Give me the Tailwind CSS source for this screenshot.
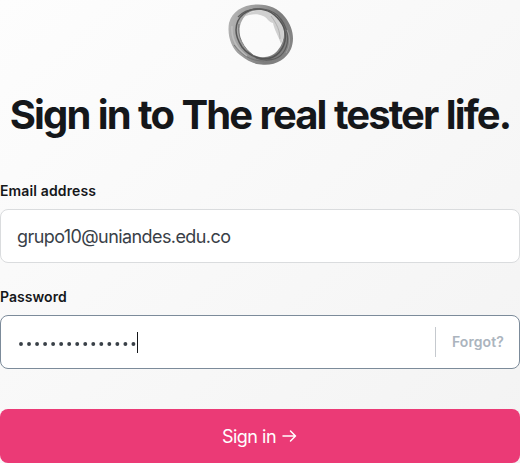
<!DOCTYPE html>
<html lang="en">
<head>
<meta charset="utf-8">
<title>Sign in</title>
<script src="https://cdn.jsdelivr.net/npm/@tailwindcss/browser@4"></script>
</head>
<body class="h-[463px] w-[520px] overflow-hidden bg-linear-to-br from-[#fdfdfd] to-[#f3f3f3] font-['Inter',sans-serif] text-[#15171a]">
<main class="flex h-[463px] flex-col">
  <header class="flex flex-col items-center">
    <svg class="h-[72px] w-20" viewBox="0 0 80 72" fill="none">
      <defs>
        <linearGradient id="ring" x1="8" y1="24" x2="73" y2="44" gradientUnits="userSpaceOnUse"><stop stop-color="#b4b4b4"/><stop offset=".35" stop-color="#999"/><stop offset=".7" stop-color="#7c7c7c"/><stop offset="1" stop-color="#858585"/></linearGradient>
        <filter id="soft"><feGaussianBlur stdDeviation=".45"/></filter>
      </defs>
      <g filter="url(#soft)">
      <path fill="url(#ring)" fill-rule="evenodd" d="M9 23C12 12 22 5 36 4.500C48 4 58 8 65 17C73 27 75 39 71 49C66 60 55 66 41 64.500C33 64 26 60 20 55C11 48 7 35 9 23ZM20 26C18 36 22 47 31 53C38 59 51 59 58 50C64 43 66 32 61 22C56 13 46 8 34 11C27 12 22 18 20 26Z"/>
      <path fill="#d0d0d0" d="M23 17C34 7 52 9 59 18C65 27 65 36 61 44C58 35 54 29 53 23C48 22 48 18 43 16C37 13 30 14 23 17Z"/>
      <path stroke="#555" stroke-width="1.500" d="M16 30C16 17 27 8 40 9C51 10 60 18 64 28C68 40 63 52 53 57C43 62 29 56 22 47C18 41 16 35 16 30Z"/>
      <path stroke="#5c5c5c" stroke-width="1.200" d="M18 17C26 8 45 5 57 15C68 25 71 42 63 53C58 60 46 62 36 58"/>
      <path stroke="#707070" stroke-width=".9" d="M19 24C17 36 23 48 34 56M14 45C22 55 30 61 44 61"/>
      <path stroke="#c8c8c8" stroke-width="1.500" stroke-opacity=".7" d="M12 26C11 37 16 48 27 56"/>
      <path stroke="#a8a8a8" stroke-width=".8" d="M51 16C57 24 60 31 60 39M67 30C71 38 70 46 66 53"/>
      </g>
    </svg>
    <h1 class="mt-[19px] h-12 whitespace-nowrap text-[40px] leading-12 font-bold tracking-[-1.9px] [word-spacing:0.8px]">Sign in to The real tester life.</h1>
  </header>
  <form class="flex flex-col">
    <label class="mt-[42px] h-5 text-sm leading-5 font-semibold tracking-[0.13px]">Email address</label>
    <div class="mt-2 flex h-[54px] items-center rounded-lg border border-[#dadcde] bg-white px-4 pt-0.5 text-lg tracking-[-0.58px] text-[#394047]"><span>grupo10@uniandes.edu.co</span></div>
    <label class="mt-6 h-5 text-sm leading-5 font-semibold tracking-[0.05px]">Password</label>
    <div class="mt-2 flex h-[54px] items-center rounded-lg border border-[#7c8b9a] bg-white pr-[15px] pl-[17px]">
      <div class="mt-[3px] flex" aria-label="Password">
        <svg class="h-2 w-[119px]" viewBox="0 0 119 8"><path d="M3 4H117" stroke="#394047" stroke-width="3.900" stroke-linecap="round" stroke-dasharray="0 8.030"/></svg>
      </div>
      <i class="h-[21px] w-px bg-[#15171a]"></i>
      <i class="ml-auto h-[30px] w-px bg-[#c5c9ce]"></i>
      <span class="ml-4 text-sm font-semibold tracking-[0.1px] text-[#abb4be]">Forgot?</span>
    </div>
    <button type="button" class="mt-10 flex h-[54px] items-center justify-center rounded-lg bg-[#eb3a76] pr-px text-lg tracking-[-0.5px] text-white"><span class="pt-0.5">Sign in</span><svg class="ml-1.5 h-4 w-[15px]" viewBox="0 0 15 16" fill="none" stroke="currentColor" stroke-width="1.500" stroke-linecap="round" stroke-linejoin="round"><path d="M1 8H13.500M8.500 3L13.500 8L8.500 13"/></svg></button>
  </form>
</main>
</body>
</html>
